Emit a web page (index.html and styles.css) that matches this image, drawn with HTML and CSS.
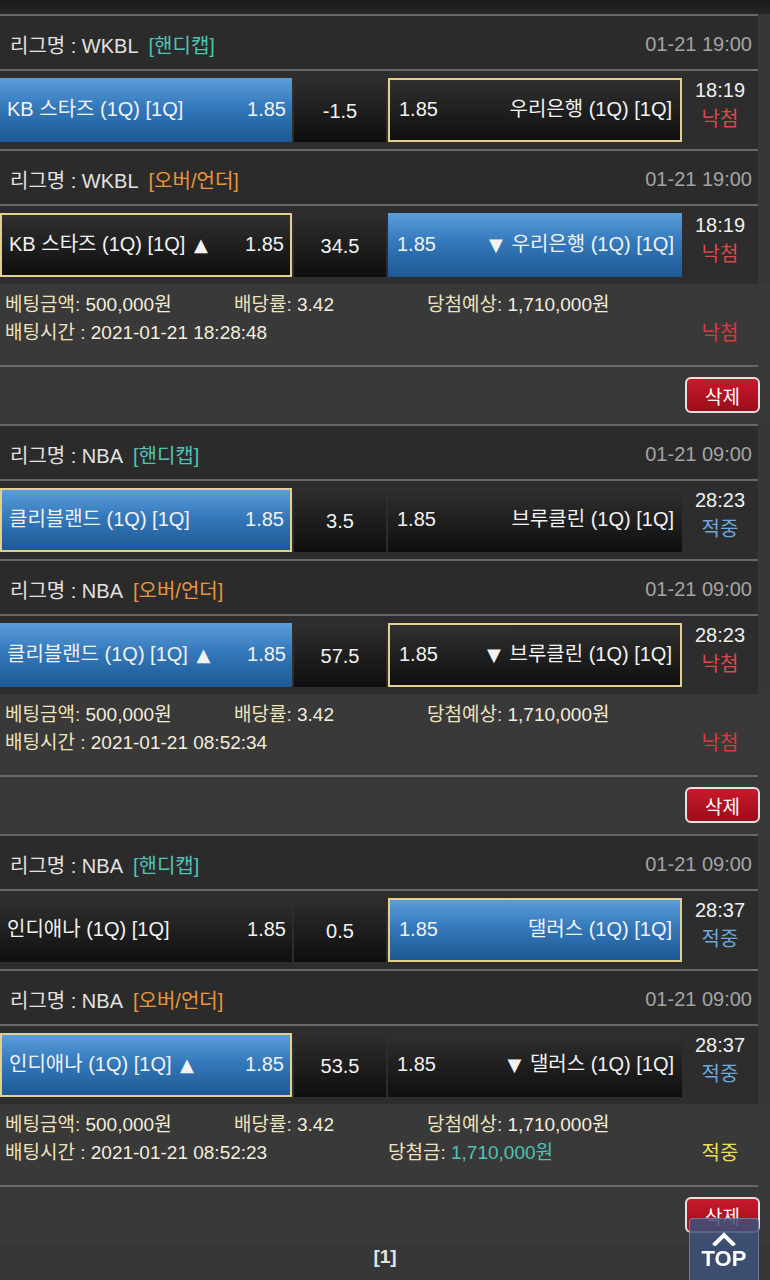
FILE: index.html
```html
<!DOCTYPE html>
<html lang="ko">
<head>
<meta charset="utf-8">
<title>베팅내역</title>
<link rel="stylesheet" href="styles.css">
</head>
<body>
<div class="topbar"></div>

<section class="slip">
  <div class="league"><span class="lg">리그명 : WKBL</span><span class="tag handi">[핸디캡]</span><span class="date">01-21 19:00</span></div>
  <div class="game">
    <div class="cell home blue"><span class="team">KB 스타즈 (1Q) [1Q]</span><span class="odds">1.85</span></div>
    <div class="cell mid"><span>-1.5</span></div>
    <div class="cell away dark sel"><span class="odds">1.85</span><span class="team">우리은행 (1Q) [1Q]</span></div>
    <div class="time"><span class="clock">18:19</span><span class="res lose">낙첨</span></div>
  </div>
  <div class="league"><span class="lg">리그명 : WKBL</span><span class="tag ou">[오버/언더]</span><span class="date">01-21 19:00</span></div>
  <div class="game">
    <div class="cell home dark sel"><span class="team">KB 스타즈 (1Q) [1Q] <span class="arr">▲</span></span><span class="odds">1.85</span></div>
    <div class="cell mid"><span>34.5</span></div>
    <div class="cell away blue"><span class="odds">1.85</span><span class="team"><span class="arr">▼</span> 우리은행 (1Q) [1Q]</span></div>
    <div class="time"><span class="clock">18:19</span><span class="res lose">낙첨</span></div>
  </div>
  <div class="info">
    <div class="row1"><span><span class="lbl">베팅금액:</span> 500,000원</span><span><span class="lbl">배당률:</span> 3.42</span><span><span class="lbl">당첨예상:</span> 1,710,000원</span></div>
    <div class="row2"><span><span class="lbl">배팅시간 :</span> 2021-01-21 18:28:48</span><span></span><span class="final lose">낙첨</span></div>
  </div>
  <div class="actions"><button class="del" type="button">삭제</button></div>
</section>

<section class="slip">
  <div class="league"><span class="lg">리그명 : NBA</span><span class="tag handi">[핸디캡]</span><span class="date">01-21 09:00</span></div>
  <div class="game">
    <div class="cell home blue sel"><span class="team">클리블랜드 (1Q) [1Q]</span><span class="odds">1.85</span></div>
    <div class="cell mid"><span>3.5</span></div>
    <div class="cell away dark"><span class="odds">1.85</span><span class="team">브루클린 (1Q) [1Q]</span></div>
    <div class="time"><span class="clock">28:23</span><span class="res win">적중</span></div>
  </div>
  <div class="league"><span class="lg">리그명 : NBA</span><span class="tag ou">[오버/언더]</span><span class="date">01-21 09:00</span></div>
  <div class="game">
    <div class="cell home blue"><span class="team">클리블랜드 (1Q) [1Q] <span class="arr">▲</span></span><span class="odds">1.85</span></div>
    <div class="cell mid"><span>57.5</span></div>
    <div class="cell away dark sel"><span class="odds">1.85</span><span class="team"><span class="arr">▼</span> 브루클린 (1Q) [1Q]</span></div>
    <div class="time"><span class="clock">28:23</span><span class="res lose">낙첨</span></div>
  </div>
  <div class="info">
    <div class="row1"><span><span class="lbl">베팅금액:</span> 500,000원</span><span><span class="lbl">배당률:</span> 3.42</span><span><span class="lbl">당첨예상:</span> 1,710,000원</span></div>
    <div class="row2"><span><span class="lbl">배팅시간 :</span> 2021-01-21 08:52:34</span><span></span><span class="final lose">낙첨</span></div>
  </div>
  <div class="actions"><button class="del" type="button">삭제</button></div>
</section>

<section class="slip">
  <div class="league"><span class="lg">리그명 : NBA</span><span class="tag handi">[핸디캡]</span><span class="date">01-21 09:00</span></div>
  <div class="game">
    <div class="cell home dark"><span class="team">인디애나 (1Q) [1Q]</span><span class="odds">1.85</span></div>
    <div class="cell mid"><span>0.5</span></div>
    <div class="cell away blue sel"><span class="odds">1.85</span><span class="team">댈러스 (1Q) [1Q]</span></div>
    <div class="time"><span class="clock">28:37</span><span class="res win">적중</span></div>
  </div>
  <div class="league"><span class="lg">리그명 : NBA</span><span class="tag ou">[오버/언더]</span><span class="date">01-21 09:00</span></div>
  <div class="game">
    <div class="cell home blue sel"><span class="team">인디애나 (1Q) [1Q] <span class="arr">▲</span></span><span class="odds">1.85</span></div>
    <div class="cell mid"><span>53.5</span></div>
    <div class="cell away dark"><span class="odds">1.85</span><span class="team"><span class="arr">▼</span> 댈러스 (1Q) [1Q]</span></div>
    <div class="time"><span class="clock">28:37</span><span class="res win">적중</span></div>
  </div>
  <div class="info">
    <div class="row1"><span><span class="lbl">베팅금액:</span> 500,000원</span><span><span class="lbl">배당률:</span> 3.42</span><span><span class="lbl">당첨예상:</span> 1,710,000원</span></div>
    <div class="row2"><span><span class="lbl">배팅시간 :</span> 2021-01-21 08:52:23</span><span><span class="lbl">당첨금:</span> <span class="prize">1,710,000원</span></span><span class="final hit">적중</span></div>
  </div>
  <div class="actions"><button class="del" type="button">삭제</button></div>
</section>

<div class="pager">[1]</div>

<a class="totop" href="#">
  <svg class="chev" width="24" height="14" viewBox="0 0 24 14"><polyline points="3,12 12,3 21,12" fill="none" stroke="#fff" stroke-width="4" stroke-linecap="square"/></svg>
  <span class="toptxt">TOP</span>
</a>
</body>
</html>
```

FILE: styles.css
```css
* { box-sizing: border-box; }
html, body { margin: 0; padding: 0; }
body {
  width: 770px;
  background: #373737;
  font-family: "Liberation Sans", "Noto Sans CJK KR", sans-serif;
  font-size: 20px;
  color: #eeeeee;
}
.topbar {
  height: 14px;
  background: linear-gradient(#1a1a1a, #272727);
}
.league {
  width: 758px;
  height: 55px;
  border-top: 2px solid #686868;
  background: #2b2b2b;
  display: flex;
  align-items: center;
  padding: 3px 6px 0 10px;
  color: #e2e2e2;
}
.tag { margin-left: 10px; }
.handi { color: #4fc3b4; }
.ou { color: #ea963b; }
.date { margin-left: auto; color: #a4a4a4; }

.game {
  width: 758px;
  border-top: 2px solid #686868;
  background: #2d2d2d;
  display: flex;
  padding: 7px 0;
}
.cell {
  height: 64px;
  display: flex;
  align-items: baseline;
  padding-top: 19px;
  line-height: 24px;
  color: #f2f2f2;
  white-space: nowrap;
}
.home { width: 292px; padding-left: 7px; padding-right: 6px; justify-content: space-between; }
.away { width: 294px; padding-left: 9px; padding-right: 8px; justify-content: space-between; }
.mid {
  width: 92px;
  margin: 0 2px;
  padding-top: 21px;
  justify-content: center;
  background: linear-gradient(#2e2e2e, #0e0e0e);
}
.dark { background: linear-gradient(#303030, #0f0f0f); }
.blue { background: linear-gradient(#5a9ddb, #3479bb 45%, #1d5893); }
.sel { border: 2px solid #e4d08c; padding-top: 17px; }
.arr {
  font-family: "DejaVu Sans", sans-serif;
  font-size: 18px;
}
.home .arr { margin-left: 3px; }
.away .arr { margin-right: 3px; }

.time {
  width: 76px;
  margin-top: -2px;
  display: flex;
  flex-direction: column;
  align-items: center;
  line-height: 29px;
}
.clock { color: #f0f0f0; }
.res.lose { color: #d9484a; }
.res.win { color: #6da8dc; }

.info {
  background: #393939;
  padding: 7px 12px 18px 5px;
  line-height: 28px;
  font-size: 19px;
  color: #f3eede;
}
.row1 { display: grid; grid-template-columns: 229px 193px 1fr; white-space: nowrap; }
.row2 { display: grid; grid-template-columns: 383px 294px 76px; white-space: nowrap; }
.lbl { color: #eee2bb; }
.prize { color: #4fc3b4; }
.final { text-align: center; font-size: 20px; }
.final.lose { color: #d93a3c; }
.final.hit { color: #e9df5b; }

.actions {
  height: 59px;
  padding: 12px 10px 0 0;
  display: flex;
  justify-content: flex-end;
  align-items: flex-start;
  background: linear-gradient(#686868, #686868) 0 0 / 758px 2px no-repeat, #393939;
}
.del {
  width: 75px;
  height: 36px;
  border: 2px solid #ecdede;
  border-radius: 6px;
  background: linear-gradient(#c81a2b, #9e0c1a);
  color: #fff;
  font-family: "Liberation Sans", "Noto Sans CJK KR", sans-serif;
  font-size: 19px;
  padding: 0;
}

.pager {
  text-align: center;
  font-weight: bold;
  line-height: 26px;
  font-size: 19px;
  color: #e4e4e4;
  padding-bottom: 20px;
}

.totop {
  position: fixed;
  right: 11px;
  bottom: 0;
  width: 70px;
  height: 62px;
  background: rgba(62, 82, 122, 0.86);
  border: 1px solid rgba(130, 145, 175, 0.7);
  border-bottom: none;
  border-radius: 4px 4px 0 0;
  display: flex;
  flex-direction: column;
  align-items: center;
  padding-top: 13px;
  text-decoration: none;
}
.chev { display: block; }
.toptxt {
  color: #fff;
  font-family: "Liberation Sans", sans-serif;
  font-weight: bold;
  font-size: 22px;
  line-height: 24px;
  margin-top: 1px;
}
```
